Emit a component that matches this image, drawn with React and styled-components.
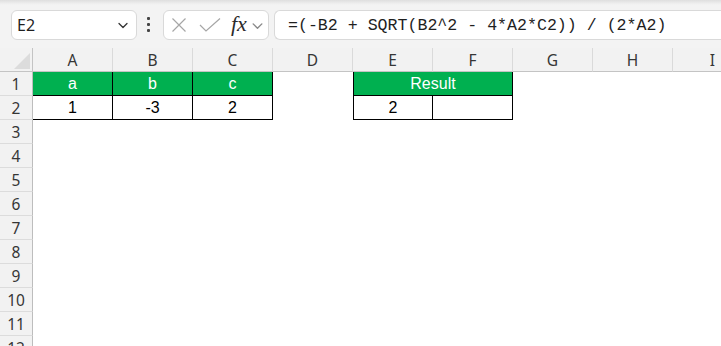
import React from 'react'
import styled, { createGlobalStyle } from 'styled-components'

const GlobalStyle = createGlobalStyle`
  html, body {
    margin: 0;
    padding: 0;
    background: #fff;
    overflow: hidden;
  }
  body {
    font-family: "Noto Sans", "Liberation Sans", sans-serif;
  }
`

const COLS = ['A', 'B', 'C', 'D', 'E', 'F', 'G', 'H', 'I']
const GREEN = '#00b050'

// row data: each entry is a cell, span / fill / borders vary
const rows = {
  1: [
    { v: 'a', fill: true, box: true },
    { v: 'b', fill: true, box: true },
    { v: 'c', fill: true, box: true },
    {},
    { v: 'Result', fill: true, box: true, left: true, span: 2 },
    {},
    {},
    {}
  ],
  2: [
    { v: '1', box: true },
    { v: '-3', box: true },
    { v: '2', box: true },
    {},
    { v: '2', box: true, left: true },
    { v: '', box: true },
    {},
    {},
    {}
  ]
}

const Sheet = styled.div`
  width: 721px;
  height: 346px;
  overflow: hidden;
  background: #fff;
`

const FormulaBar = styled.div`
  height: 48px;
  box-sizing: border-box;
  display: flex;
  align-items: flex-start;
  padding: 10px 0 0 11px;
  background: linear-gradient(#dedede 0, #ececec 3px, #f3f3f3 5px);
  overflow: hidden;
`

const Field = styled.div`
  height: 30px;
  box-sizing: border-box;
  display: flex;
  align-items: center;
  flex-shrink: 0;
  background: #fff;
  border: 1px solid #d9d9d9;
  border-radius: 6px;
`

const NameBox = styled(Field)`
  width: 126px;
  padding: 0 7px 0 5px;
  justify-content: space-between;
  font-size: 16px;
  color: #1f1f1f;
`

const Dots = styled.div`
  display: flex;
  flex-direction: column;
  gap: 3px;
  margin: 7px 13px 0 10px;
  span {
    width: 3px;
    height: 3px;
    background: #444;
    border-radius: 1px;
  }
`

const FxBox = styled(Field)`
  width: 106px;
  padding: 0 0 0 7px;
`

const Fx = styled.span`
  font-family: "Liberation Serif", "DejaVu Serif", serif;
  font-style: italic;
  font-size: 22px;
  color: #2b2b2b;
  margin: -3px 4px 0 10px;
`

const FormulaInput = styled(Field)`
  width: 470px;
  margin-left: 5px;
  padding-left: 13px;
  border-right: none;
  border-radius: 6px 0 0 6px;
  font-family: "Liberation Mono", "DejaVu Sans Mono", monospace;
  font-size: 16.6px;
  color: #1f1f1f;
  white-space: pre;
`

const Grid = styled.div`
  display: grid;
  grid-template-columns: 33px repeat(9, 80px);
  grid-auto-rows: 24px;
`

const Corner = styled.div`
  background: #f2f2f2;
  border-right: 1px solid #c4c4c4;
  border-bottom: 1px solid #c4c4c4;
  display: flex;
  align-items: flex-end;
  justify-content: flex-end;
  padding: 0 2px 2px 0;
`

const ColHead = styled.div`
  background: #f2f2f2;
  border-right: 1px solid #dadada;
  border-bottom: 1px solid #c4c4c4;
  display: flex;
  align-items: center;
  justify-content: center;
  font-size: 15.5px;
  color: #363636;
`

const RowHead = styled.div`
  background: #f2f2f2;
  border-right: 1px solid #bdbdbd;
  border-bottom: 1px solid #dcdcdc;
  display: flex;
  align-items: center;
  justify-content: center;
  font-size: 15.5px;
  color: #363636;
`

const Cell = styled.div`
  grid-column: span ${p => p.$span || 1};
  display: flex;
  align-items: center;
  justify-content: center;
  font-family: "Liberation Sans", Arial, sans-serif;
  font-size: 16px;
  background: ${p => (p.$fill ? GREEN : '#fff')};
  color: ${p => (p.$fill ? '#fff' : '#000')};
  border-right: ${p => (p.$box ? '1px solid #000' : 'none')};
  border-bottom: ${p => (p.$box ? '1px solid #000' : 'none')};
  border-left: ${p => (p.$left ? '1px solid #000' : 'none')};
`

const Chevron = ({ size = 12, color = '#333' }) => (
  <svg width={size} height={size} viewBox="0 0 12 12" fill="none">
    <path d="M2 4.5 L6 8.5 L10 4.5" stroke={color} strokeWidth="1.3" strokeLinecap="round" strokeLinejoin="round" />
  </svg>
)

const Cross = () => (
  <svg width="16" height="16" viewBox="0 0 16 16" fill="none">
    <path d="M1.5 1.5 L14.5 14.5 M14.5 1.5 L1.5 14.5" stroke="#a6a6a6" strokeWidth="1.2" />
  </svg>
)

const Tick = () => (
  <svg width="22" height="16" viewBox="0 0 22 16" fill="none" style={{ marginLeft: 12 }}>
    <path d="M1 8 L7 14 L21 1.5" stroke="#a6a6a6" strokeWidth="1.2" />
  </svg>
)

const Triangle = () => (
  <svg width="16" height="16" viewBox="0 0 16 16">
    <polygon points="16,0 16,16 0,16" fill="#dcdcdc" />
  </svg>
)

export default function App() {
  const rowNums = Array.from({ length: 12 }, (_, i) => i + 1)

  return (
    <Sheet>
      <GlobalStyle />
      <FormulaBar>
        <NameBox>
          <span>E2</span>
          <Chevron size={12} color="#333" />
        </NameBox>
        <Dots>
          <span />
          <span />
          <span />
        </Dots>
        <FxBox>
          <Cross />
          <Tick />
          <Fx>fx</Fx>
          <Chevron size={13} color="#8a8a8a" />
        </FxBox>
        <FormulaInput>=(-B2 + SQRT(B2^2 - 4*A2*C2)) / (2*A2)</FormulaInput>
      </FormulaBar>

      <Grid>
        <Corner>
          <Triangle />
        </Corner>
        {COLS.map(c => (
          <ColHead key={c}>{c}</ColHead>
        ))}
        {rowNums.map(n => {
          const cells = rows[n] || COLS.map(() => ({}))
          return (
            <React.Fragment key={n}>
              <RowHead>{n}</RowHead>
              {cells.map((cell, i) => (
                <Cell
                  key={i}
                  $fill={cell.fill}
                  $box={cell.box}
                  $left={cell.left}
                  $span={cell.span}
                >
                  {cell.v}
                </Cell>
              ))}
            </React.Fragment>
          )
        })}
      </Grid>
    </Sheet>
  )
}
